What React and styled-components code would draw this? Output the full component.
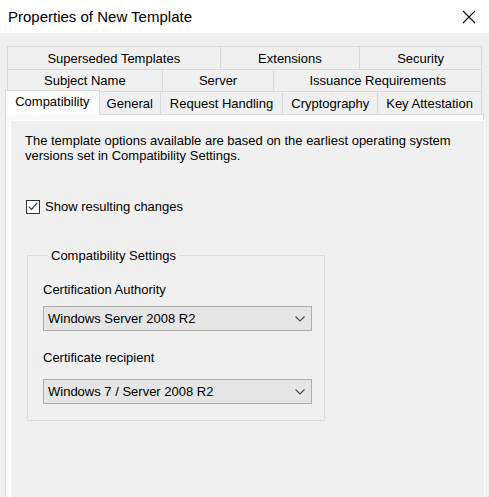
import React from 'react';
import styled, { createGlobalStyle } from 'styled-components';

const GlobalStyle = createGlobalStyle`
  html, body {
    margin: 0;
    padding: 0;
    background: #f0f0f0;
  }
  body {
    font-family: "Liberation Sans", Arial, sans-serif;
    font-size: 13px;
    color: #000;
  }
`;

const Window = styled.div`
  width: 489px;
  height: 497px;
  overflow: hidden;
  background: #f0f0f0;
  display: flex;
  flex-direction: column;
`;

const TitleBar = styled.div`
  height: 33px;
  flex: none;
  background: #fff;
  display: flex;
  align-items: center;
  justify-content: space-between;
  padding: 0 8px;
`;

const Title = styled.div`
  font-size: 15px;
  color: #000;
`;

const CloseButton = styled.div`
  width: 14px;
  height: 14px;
  margin-right: 5px;
  display: flex;
`;

const Body = styled.div`
  flex: 1;
  display: flex;
  flex-direction: column;
  padding: 13px 5px 0 5px;
`;

const TabRow = styled.div`
  display: flex;
  height: ${p => p.$h}px;
  margin-left: ${p => p.$indent}px;
  width: ${p => 477 - p.$indent}px;
  align-items: flex-end;
`;

const Tab = styled.div`
  box-sizing: border-box;
  width: ${p => p.$w}px;
  height: 100%;
  margin-left: -1px;
  border: 1px solid #d9d9d9;
  border-bottom: none;
  background: #f0f0f0;
  display: flex;
  align-items: center;
  justify-content: center;
  white-space: nowrap;
  &:first-child {
    margin-left: 0;
  }
`;

const ActiveTab = styled(Tab)`
  height: 25px;
  margin-bottom: -1px;
  background: #fff;
  position: relative;
  z-index: 1;
  align-items: flex-start;
  padding-top: 3px;
`;

const Panel = styled.div`
  flex: 1;
  border: 1px solid #d9d9d9;
  border-bottom: none;
  background: #fbfbfb;
  padding: 5px 4px 0 4px;
  display: flex;
`;

const Page = styled.div`
  flex: 1;
  background: #f0f0f0;
  border: 1px solid #fdfdfd;
  border-bottom: none;
  padding: 12px 14px 0 14px;
`;

const Description = styled.p`
  margin: 0;
  line-height: 15px;
  width: 445px;
`;

const CheckRow = styled.label`
  display: flex;
  align-items: center;
  gap: 5px;
  margin: 36px 0 0 1px;
`;

const CheckBox = styled.span`
  box-sizing: border-box;
  width: 14px;
  height: 14px;
  border: 1px solid #333;
  background: #fff;
  display: flex;
  align-items: center;
  justify-content: center;
`;

const Group = styled.fieldset`
  width: 298px;
  box-sizing: border-box;
  margin: 34px 0 0 2px;
  border: 1px solid #dcdcdc;
  padding: 19px 12px 16px 15px;
  min-width: 0;
`;

const Legend = styled.legend`
  padding: 0 3px;
  margin-left: 5px;
`;

const FieldLabel = styled.div`
  line-height: 16px;
  margin-bottom: ${p => p.$gap}px;
`;

const Select = styled.div`
  box-sizing: border-box;
  width: 269px;
  height: 25px;
  border: 1px solid #adadad;
  background: #e5e5e5;
  display: flex;
  align-items: center;
  justify-content: space-between;
  padding: 0 6px 0 4px;
  margin-bottom: ${p => p.$gap}px;
`;

const Chevron = () => (
  <svg width="10" height="6" viewBox="0 0 10 6">
    <path d="M0.5 0.5 L5 5 L9.5 0.5" fill="none" stroke="#4d4d4d" strokeWidth="1.2" />
  </svg>
);

const rows = [
  { h: 23, indent: 2, tabs: [['Superseded Templates', 214], ['Extensions', 141], ['Security', 123]] },
  { h: 22, indent: 2, tabs: [['Subject Name', 156], ['Server', 113], ['Issuance Requirements', 209]] },
];

const bottomTabs = [['General', 62], ['Request Handling', 124], ['Cryptography', 96], ['Key Attestation', 105]];

const App = () => (
  <Window>
    <GlobalStyle />
    <TitleBar>
      <Title>Properties of New Template</Title>
      <CloseButton>
        <svg width="14" height="14" viewBox="0 0 14 14">
          <path d="M1 1 L13 13 M13 1 L1 13" stroke="#111" strokeWidth="1.1" />
        </svg>
      </CloseButton>
    </TitleBar>
    <Body>
      {rows.map((row, i) => (
        <TabRow key={i} $h={row.h} $indent={row.indent}>
          {row.tabs.map(([label, w]) => (
            <Tab key={label} $w={w}>{label}</Tab>
          ))}
        </TabRow>
      ))}
      <TabRow $h={23} $indent={0}>
        <ActiveTab $w={95}>Compatibility</ActiveTab>
        {bottomTabs.map(([label, w]) => (
          <Tab key={label} $w={w}>{label}</Tab>
        ))}
      </TabRow>
      <Panel>
        <Page>
          <Description>
            The template options available are based on the earliest operating system versions set in Compatibility Settings.
          </Description>
          <CheckRow>
            <CheckBox>
              <svg width="10" height="9" viewBox="0 0 10 9">
                <path d="M0.8 4.6 L3.6 7.4 L9.2 0.9" fill="none" stroke="#333" strokeWidth="1.2" />
              </svg>
            </CheckBox>
            Show resulting changes
          </CheckRow>
          <Group>
            <Legend>Compatibility Settings</Legend>
            <FieldLabel $gap={8}>Certification Authority</FieldLabel>
            <Select $gap={19}>
              <span>Windows Server 2008 R2</span>
              <Chevron />
            </Select>
            <FieldLabel $gap={13}>Certificate recipient</FieldLabel>
            <Select $gap={0}>
              <span>Windows 7 / Server 2008 R2</span>
              <Chevron />
            </Select>
          </Group>
        </Page>
      </Panel>
    </Body>
  </Window>
);

export default App;
